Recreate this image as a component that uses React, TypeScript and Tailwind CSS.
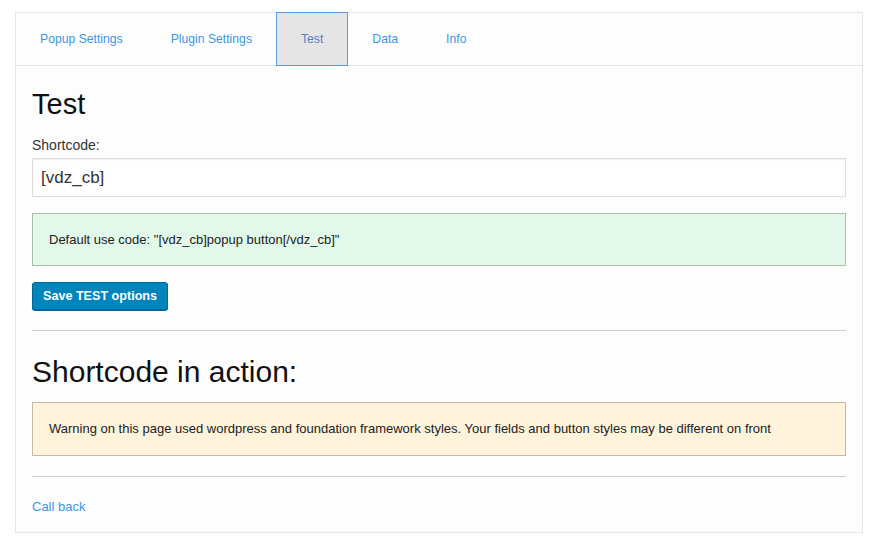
import React from 'react';

const tabs = ['Popup Settings', 'Plugin Settings', 'Test', 'Data', 'Info'];

const App: React.FC = () => {
  return (
    <div className="min-h-[546px] bg-white pt-3 px-[15px] font-['Liberation_Sans',Arial,sans-serif]">
      <div className="w-[848px] h-[521px] border border-[#e5e5e5] bg-[#fdfdfd]">
        <div className="flex h-[53px] border-b border-[#e5e5e5]">
          {tabs.map((t) =>
            t === 'Test' ? (
              <div key={t} className="-mt-px flex h-[54px] items-center border border-[#5b9dd9] bg-[#e5e5e5] px-6 text-[12.2px] text-[#4f7fc4]">
                {t}
              </div>
            ) : (
              <div key={t} className="flex items-center px-6 text-[12.2px] text-[#3c97e6]">
                {t}
              </div>
            )
          )}
        </div>

        <div className="px-4">
          <h1 className="mt-[21px] text-[29px] leading-[34px] text-[#111]">Test</h1>
          <label className="mt-[15px] block text-[14px] leading-[18px] text-[#333]">Shortcode:</label>
          <div className="mt-[4px] flex h-[39px] items-center border border-[#dddddd] bg-white px-2 text-[17px] text-[#333] shadow-[inset_0_1px_2px_rgba(0,0,0,0.07)]">
            [vdz_cb]
          </div>
          <div className="mt-4 flex h-[53px] items-center border border-[#a6c0ad] bg-[#e1f8ea] px-4 text-[13px] text-[#222]">
            Default use code: "[vdz_cb]popup button[/vdz_cb]"
          </div>
          <button className="mt-4 h-[28px] rounded-[3px] border border-[#006799] bg-[#0085ba] px-[10px] text-[12.6px] font-bold text-white shadow-[0_1px_0_#006799]">
            Save TEST options
          </button>
          <hr className="mt-[20px] border-t border-[#cccccc]" />
          <h2 className="mt-[24px] text-[30px] leading-[34px] text-[#111]">Shortcode in action:</h2>
          <div className="mt-[13px] flex h-[54px] items-center border border-[#c6bb9f] bg-[#fff3dc] px-4 text-[13px] text-[#222]">
            Warning on this page used wordpress and foundation framework styles. Your fields and button styles may be different on front
          </div>
          <hr className="mt-[20px] border-t border-[#cccccc]" />
          <a className="mt-[20px] block text-[13px] text-[#3c97e6]">Call back</a>
        </div>
      </div>
    </div>
  );
};

export default App;
